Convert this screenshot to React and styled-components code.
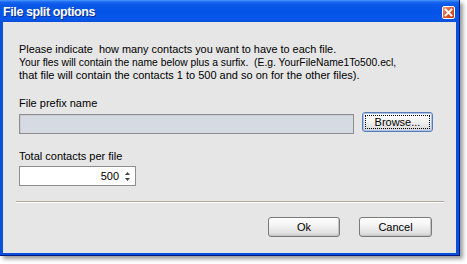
import React from 'react';
import styled, { createGlobalStyle } from 'styled-components';

const Global = createGlobalStyle`
  html, body { margin: 0; padding: 0; background: #fff; }
  body { font-family: "Liberation Sans", Arial, sans-serif; }
  * { box-sizing: border-box; }
`;

const Page = styled.div`
  width: 467px;
  height: 264px;
  background: #fff;
  overflow: hidden;
`;

const Window = styled.div`
  width: 460px;
  height: 256px;
  display: flex;
  flex-direction: column;
  background: #0a50dc;
  border-right: 1px solid #001a80;
  border-bottom: 1px solid #001a80;
  box-shadow: 3px 3px 4px rgba(0, 0, 0, 0.4);
`;

const TitleBar = styled.div`
  height: 22px;
  flex: none;
  display: flex;
  align-items: center;
  justify-content: space-between;
  padding: 0 4px 0 3px;
  background: linear-gradient(
    #4a9cff 0px,
    #1a66f0 2px,
    #0a58e8 5px,
    #0254e6 12px,
    #0857ec 19px,
    #0a4fd8 22px
  );
`;

const Title = styled.span`
  color: #fff;
  font-family: "Liberation Sans", Arial, sans-serif;
  font-weight: bold;
  font-size: 12.5px;
  letter-spacing: -0.4px;
  text-shadow: 1px 1px 0 #0a2a90;
  margin-top: 2px;
`;

const CloseButton = styled.div`
  width: 13px;
  height: 13px;
  margin-top: 3px;
  border: 1px solid #fff;
  border-radius: 2px;
  background: linear-gradient(135deg, #ee9a7e, #d9542d 55%, #c13d17);
  display: flex;
  align-items: center;
  justify-content: center;
`;

const Client = styled.div`
  flex: 1;
  margin: 0 3px 2px 3px;
  background: #e6e6e6;
  padding: 21px 12px 0 16px;
  font-size: 11px;
  color: #000;
  display: flex;
  flex-direction: column;
`;

const Description = styled.div`
  line-height: 13px;
  white-space: pre;
  display: flex;
  flex-direction: column;
  align-items: flex-start;
`;

const Line = styled.div`
  transform: scaleX(${(p) => p.$squeeze || 1});
  transform-origin: left center;
`;

const Label = styled.div`
  line-height: 13px;
  margin-top: ${(p) => p.$top}px;
`;

const FieldRow = styled.div`
  display: flex;
  align-items: flex-start;
  gap: 8px;
  margin-top: 2px;
`;

const PrefixInput = styled.div`
  width: 335px;
  height: 20px;
  margin-top: 2px;
  background: #d6dae2;
  border: 1px solid #8e8e8e;
  box-shadow: inset 1px 1px 0 #c8ccd4;
`;

const Button = styled.div`
  width: ${(p) => p.$w}px;
  height: 20px;
  border: 1px solid ${(p) => (p.$focused ? '#5a7cb4' : '#7a7a7a')};
  border-radius: 3px;
  background: linear-gradient(#ffffff 0%, #f4f4f4 40%, #e2e2e2 80%, #cfcfcf 100%);
  box-shadow: ${(p) =>
    p.$focused ? 'inset 0 0 0 1px #a9c4ec' : 'inset -1px -1px 0 #c4c4c4'};
  display: flex;
  align-items: center;
  justify-content: center;
  padding: 2px;
`;

const ButtonFace = styled.span`
  flex: 1;
  align-self: stretch;
  display: flex;
  align-items: center;
  justify-content: center;
  border: 1px dotted ${(p) => (p.$focused ? '#000' : 'transparent')};
  font-size: 11px;
  line-height: 13px;
`;

const Spinner = styled.div`
  width: 117px;
  height: 20px;
  margin-top: 3px;
  background: #fff;
  border: 1px solid #8e8e8e;
  display: flex;
  align-items: center;
  justify-content: flex-end;
  padding-right: 5px;
  gap: 6px;
`;

const SpinValue = styled.span`
  font-size: 11px;
  line-height: 13px;
`;

const Arrows = styled.div`
  display: flex;
  flex-direction: column;
  gap: 3px;
`;

const Separator = styled.div`
  margin: 15px 0 0 -3px;
  border-top: 1px solid #aca899;
  border-bottom: 1px solid #fff;
`;

const ButtonRow = styled.div`
  display: flex;
  justify-content: flex-end;
  gap: 19px;
  margin-top: 14px;
  padding-right: 12px;
`;

const Tri = ({ up }) => (
  <svg width="5" height="3" viewBox="0 0 5 3">
    <path d={up ? 'M2.5 0 L5 3 L0 3 Z' : 'M0 0 L5 0 L2.5 3 Z'} fill="#444" />
  </svg>
);

export default function App() {
  return (
    <>
      <Global />
      <Page>
        <Window>
          <TitleBar>
            <Title>File split options</Title>
            <CloseButton>
              <svg width="9" height="9" viewBox="0 0 9 9">
                <path d="M1.5 1.5 L7.5 7.5 M7.5 1.5 L1.5 7.5" stroke="#fff" strokeWidth="1.8" strokeLinecap="square" />
              </svg>
            </CloseButton>
          </TitleBar>
          <Client>
            <Description>
              <Line $squeeze={0.99}>Please indicate  how many contacts you want to have to each file.</Line>
              <Line $squeeze={0.937}>Your fles will contain the name below plus a surfix.  (E.g. YourFileName1To500.ecl,</Line>
              <Line>that file will contain the contacts 1 to 500 and so on for the other files).</Line>
            </Description>
            <Label $top={15}>File prefix name</Label>
            <FieldRow>
              <PrefixInput />
              <Button $w={71} $focused>
                <ButtonFace $focused>Browse...</ButtonFace>
              </Button>
            </FieldRow>
            <Label $top={16}>Total contacts per file</Label>
            <Spinner>
              <SpinValue>500</SpinValue>
              <Arrows>
                <Tri up />
                <Tri />
              </Arrows>
            </Spinner>
            <Separator />
            <ButtonRow>
              <Button $w={72}>
                <ButtonFace>Ok</ButtonFace>
              </Button>
              <Button $w={73}>
                <ButtonFace>Cancel</ButtonFace>
              </Button>
            </ButtonRow>
          </Client>
        </Window>
      </Page>
    </>
  );
}
